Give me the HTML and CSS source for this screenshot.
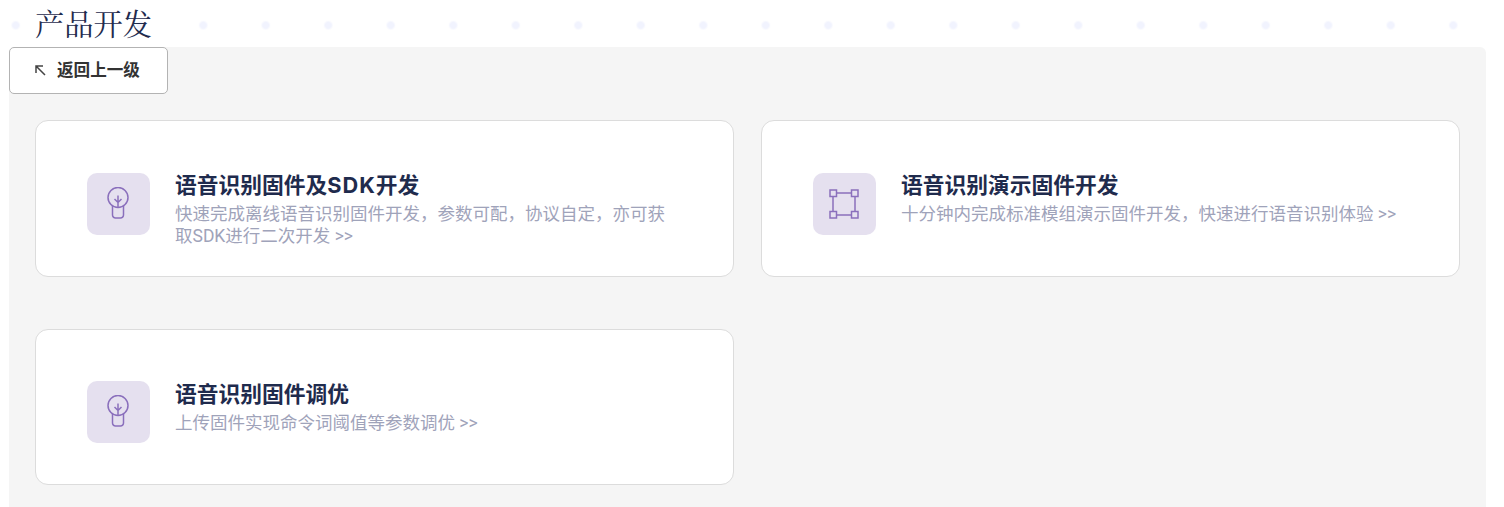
FILE: index.html
```html
<!DOCTYPE html>
<html lang="zh-CN">
  <head>
    <meta charset="utf-8" />
    <title>产品开发</title>
    <link rel="stylesheet" href="styles.css">
  </head>

  <body>
    <h1 class="page-title">产品开发</h1>
    <div class="panel">
      <button class="btn-back">
        <svg class="btn-back-icon" viewBox="0 0 11 11" width="11" height="11">
          <path d="M1 8V1h7M1 1l9 9" />
        </svg>
        返回上一级
      </button>
      <div class="card-grid">
        <div class="card">
          <div class="card-icon">
            <svg viewBox="0 0 24 34" width="24" height="34">
              <circle cx="12" cy="10.500" r="10" />
              <path d="M6.500 19v9a3 3 0 0 0 3 3h5a3 3 0 0 0 3-3v-9M12 8.500v12.250M8.500 12l3.500 3.500 3.500-3.500" />
            </svg>
          </div>
          <div class="card-text">
            <h2 class="card-title">语音识别固件及<span class="latin">SDK</span>开发</h2>
            <p class="card-desc">快速完成离线语音识别固件开发，参数可配，协议自定，亦可获取SDK进行二次开发 &gt;&gt;</p>
          </div>
        </div>
        <div class="card">
          <div class="card-icon">
            <svg viewBox="0 0 30 30" width="30" height="30">
              <rect x="1" y="1" width="6.500" height="6.500" />
              <rect x="22.500" y="1" width="6.500" height="6.500" />
              <rect x="1" y="22.500" width="6.500" height="6.500" />
              <rect x="22.500" y="22.500" width="6.500" height="6.500" />
              <path d="M7.500 4h15M7.500 26h15M4 7.500v15M26 7.500v15" />
            </svg>
          </div>
          <div class="card-text">
            <h2 class="card-title">语音识别演示固件开发</h2>
            <p class="card-desc">十分钟内完成标准模组演示固件开发，快速进行语音识别体验 &gt;&gt;</p>
          </div>
        </div>
        <div class="card">
          <div class="card-icon">
            <svg viewBox="0 0 24 34" width="24" height="34">
              <circle cx="12" cy="10.500" r="10" />
              <path d="M6.500 19v9a3 3 0 0 0 3 3h5a3 3 0 0 0 3-3v-9M12 8.500v12.250M8.500 12l3.500 3.500 3.500-3.500" />
            </svg>
          </div>
          <div class="card-text">
            <h2 class="card-title">语音识别固件调优</h2>
            <p class="card-desc">上传固件实现命令词阈值等参数调优 &gt;&gt;</p>
          </div>
        </div>
      </div>
    </div>
  </body>
</html>
```

FILE: styles.css
```css
html, body {
  height: 100%;
}

body {
  margin: 0;
  overflow: hidden;
  background-color: #ffffff;
  background-image: radial-gradient(circle, #f1f3fe 3px, transparent 5px);
  background-size: 62.5px 62.5px;
  background-position: -15.5px -6px;
  background-repeat: repeat-x;
  font-family: Roboto, "Noto Sans CJK SC", sans-serif;
}

/* Big title, the only serif text on the page */
.page-title {
  margin: 0;
  height: 47px;
  padding-left: 35px;
  font-family: "Noto Serif CJK SC", "Liberation Serif", serif;
  font-size: 29.25px;
  font-weight: 400;
  line-height: 44px;
  color: #1f2b4d;
}

.panel {
  box-sizing: border-box;
  height: 460px;
  margin: 0 18px 0 9px;
  background-color: #f5f5f5;
  border-radius: 6px 6px 0 0;
}

.btn-back {
  display: flex;
  align-items: center;
  gap: 11px;
  box-sizing: border-box;
  width: 159px;
  height: 47px;
  padding: 0 0 3px 25px;
  background-color: #ffffff;
  border: 1px solid #b3b3b3;
  border-radius: 5px;
  font-family: inherit;
  font-size: 16.6px;
  font-weight: 700;
  color: #333333;
}

.btn-back-icon {
  margin-top: 3px;
  fill: none;
  stroke: #444444;
  stroke-width: 1.5;
}

.card-grid {
  display: grid;
  grid-template-columns: 699px 699px;
  grid-auto-rows: 156.500px;
  column-gap: 27px;
  row-gap: 52px;
  padding: 26px 26px 0;
}

.card {
  display: flex;
  align-items: flex-start;
  gap: 25.500px;
  box-sizing: border-box;
  padding: 51.500px 58px 0 51px;
  background-color: #ffffff;
  border: 1px solid #dcdcdc;
  border-radius: 13px;
}

.card-icon {
  display: flex;
  flex: none;
  align-items: center;
  justify-content: center;
  width: 62.500px;
  height: 62.250px;
  background-color: #e5e0ef;
  border-radius: 10px;
}

.card-icon svg {
  fill: none;
  stroke: #8a6fbc;
  stroke-width: 1.5;
}

.card-text {
  padding-top: 0.500px;
}

.card-title {
  margin: 0 0 6px;
  font-family: Inter, "Noto Sans CJK SC", sans-serif;
  font-size: 21.750px;
  font-weight: 700;
  line-height: 24px;
  color: #1f2b4d;
}

.latin {
  letter-spacing: 1px;
}

.card-desc {
  margin: 0;
  font-size: 17.500px;
  font-weight: 400;
  line-height: 22px;
  color: #9fa3ba;
}
```
